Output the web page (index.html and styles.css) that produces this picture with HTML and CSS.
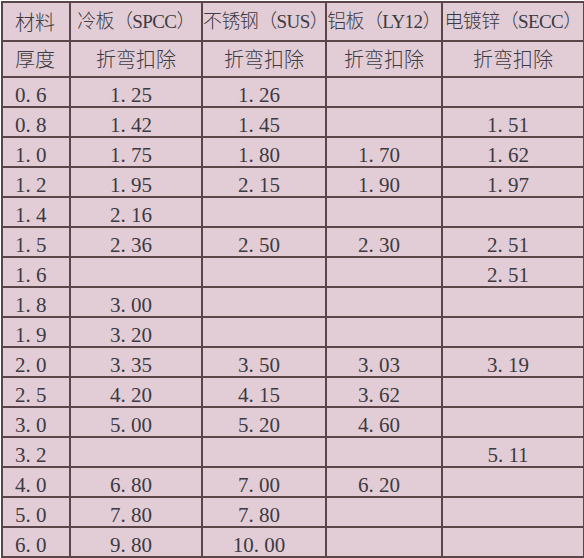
FILE: index.html
```html
<!DOCTYPE html>
<html lang="zh-CN">
<head>
<meta charset="utf-8">
<title>折弯扣除表</title>
<link rel="stylesheet" href="styles.css">
</head>
<body>
<table class="sheet">
  <colgroup>
    <col class="c0"><col class="c1"><col class="c2"><col class="c3"><col class="c4">
  </colgroup>
  <tr class="r-head">
    <td class="lab">材料</td>
    <td class="mat">冷板（SPCC）</td>
    <td class="mat">不锈钢（SUS）</td>
    <td class="mat">铝板（LY12）</td>
    <td class="mat">电镀锌（SECC）</td>
  </tr>
  <tr class="r-sub">
    <td class="lab">厚度</td>
    <td class="sub">折弯扣除</td>
    <td class="sub">折弯扣除</td>
    <td class="sub">折弯扣除</td>
    <td class="sub">折弯扣除</td>
  </tr>
  <tr><td class="t">0<span class="d">.</span>6</td><td class="v">1<span class="d">.</span>25</td><td class="v">1<span class="d">.</span>26</td><td class="v"></td><td class="v"></td></tr>
  <tr><td class="t">0<span class="d">.</span>8</td><td class="v">1<span class="d">.</span>42</td><td class="v">1<span class="d">.</span>45</td><td class="v"></td><td class="v">1<span class="d">.</span>51</td></tr>
  <tr><td class="t">1<span class="d">.</span>0</td><td class="v">1<span class="d">.</span>75</td><td class="v">1<span class="d">.</span>80</td><td class="v">1<span class="d">.</span>70</td><td class="v">1<span class="d">.</span>62</td></tr>
  <tr><td class="t">1<span class="d">.</span>2</td><td class="v">1<span class="d">.</span>95</td><td class="v">2<span class="d">.</span>15</td><td class="v">1<span class="d">.</span>90</td><td class="v">1<span class="d">.</span>97</td></tr>
  <tr><td class="t">1<span class="d">.</span>4</td><td class="v">2<span class="d">.</span>16</td><td class="v"></td><td class="v"></td><td class="v"></td></tr>
  <tr><td class="t">1<span class="d">.</span>5</td><td class="v">2<span class="d">.</span>36</td><td class="v">2<span class="d">.</span>50</td><td class="v">2<span class="d">.</span>30</td><td class="v">2<span class="d">.</span>51</td></tr>
  <tr><td class="t">1<span class="d">.</span>6</td><td class="v"></td><td class="v"></td><td class="v"></td><td class="v">2<span class="d">.</span>51</td></tr>
  <tr><td class="t">1<span class="d">.</span>8</td><td class="v">3<span class="d">.</span>00</td><td class="v"></td><td class="v"></td><td class="v"></td></tr>
  <tr><td class="t">1<span class="d">.</span>9</td><td class="v">3<span class="d">.</span>20</td><td class="v"></td><td class="v"></td><td class="v"></td></tr>
  <tr><td class="t">2<span class="d">.</span>0</td><td class="v">3<span class="d">.</span>35</td><td class="v">3<span class="d">.</span>50</td><td class="v">3<span class="d">.</span>03</td><td class="v">3<span class="d">.</span>19</td></tr>
  <tr><td class="t">2<span class="d">.</span>5</td><td class="v">4<span class="d">.</span>20</td><td class="v">4<span class="d">.</span>15</td><td class="v">3<span class="d">.</span>62</td><td class="v"></td></tr>
  <tr><td class="t">3<span class="d">.</span>0</td><td class="v">5<span class="d">.</span>00</td><td class="v">5<span class="d">.</span>20</td><td class="v">4<span class="d">.</span>60</td><td class="v"></td></tr>
  <tr><td class="t">3<span class="d">.</span>2</td><td class="v"></td><td class="v"></td><td class="v"></td><td class="v">5<span class="d">.</span>11</td></tr>
  <tr><td class="t">4<span class="d">.</span>0</td><td class="v">6<span class="d">.</span>80</td><td class="v">7<span class="d">.</span>00</td><td class="v">6<span class="d">.</span>20</td><td class="v"></td></tr>
  <tr><td class="t">5<span class="d">.</span>0</td><td class="v">7<span class="d">.</span>80</td><td class="v">7<span class="d">.</span>80</td><td class="v"></td><td class="v"></td></tr>
  <tr><td class="t">6<span class="d">.</span>0</td><td class="v">9<span class="d">.</span>80</td><td class="v">10<span class="d">.</span>00</td><td class="v"></td><td class="v"></td></tr>
</table>
<div class="underline"></div>
</body>
</html>
```

FILE: styles.css
```css
html, body {
  margin: 0;
  padding: 0;
  background: #ffffff;
}

.sheet {
  border-collapse: collapse;
  table-layout: fixed;
  width: 582px;
  margin: 1px 0 0 1px;
  font-family: "Liberation Serif", "Noto Sans CJK SC", serif;
  color: #3c3a42;
}

.c0 { width: 68px; }
.c1 { width: 132px; }
.c2 { width: 124px; }
.c3 { width: 116px; }
.c4 { width: 142px; }

.sheet td {
  border: 2px solid #5a4649;
  padding: 0;
  white-space: nowrap;
  background: #e2cdd6;
  vertical-align: middle;
  line-height: 22px;
}

.sheet tr { height: 30px; }
.sheet tr.r-head { height: 39px; }
.sheet tr.r-sub { height: 36px; }

.lab {
  background: #f1e3e5;
  font-family: "Noto Sans CJK SC", sans-serif;
  font-weight: 300;
  font-size: 20px;
  text-align: left;
  padding-left: 12px !important;
}

.mat {
  background: #f1e3e5;
  font-size: 19px;
  letter-spacing: -0.6px;
  font-weight: 300;
  text-align: center;
  overflow: visible;
}

.sub {
  background: #ddcad1;
  font-family: "Noto Sans CJK SC", sans-serif;
  font-weight: 300;
  font-size: 20px;
  text-align: center;
}

.t {
  background: #f1e3e5;
  font-size: 21px;
  text-align: left;
  padding: 6px 0 0 12px !important;
}

.v {
  font-size: 21px;
  text-align: center;
  padding: 6px 10px 0 0 !important;
}

.d {
  display: inline-block;
  width: 0.5em;
  text-align: left;
}

.underline {
  width: 324px;
  height: 0;
  margin-top: 1px;
  border-top: 1px solid #7a6a6c;
}
```
